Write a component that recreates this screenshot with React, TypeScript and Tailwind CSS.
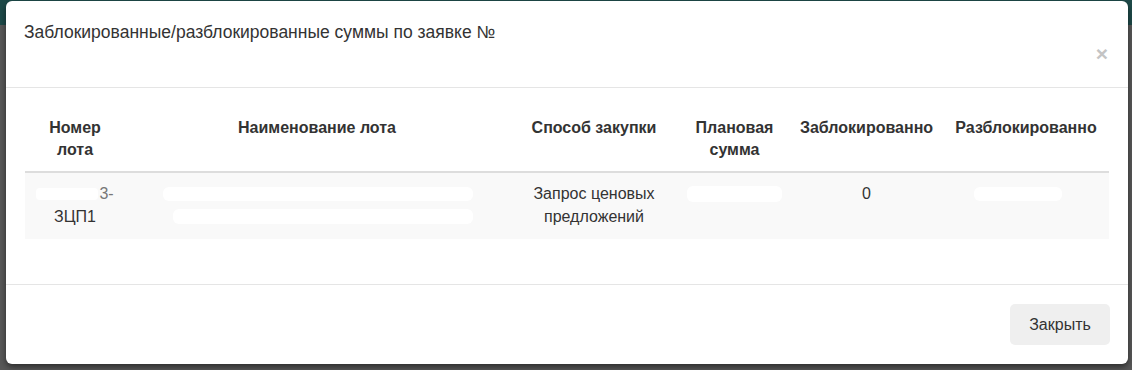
export default function App() {
  return (
    <div className="relative h-[370px] w-[1132px] overflow-hidden bg-[#585858] font-['Liberation_Sans',Arial,sans-serif] text-[#333]">
      <div className="h-[25px] bg-[#1e4a49]" />

      <div className="absolute left-[6px] top-[1px] w-[1122px] rounded-[6px] bg-white shadow-[0_3px_6px_rgba(0,0,0,0.5)]">
        <div className="flex h-[87px] justify-between border-b border-[#e5e5e5] pl-[18px] pr-[20px] pt-[19px]">
          <h4 className="text-[17.5px] leading-[24px]">Заблокированные/разблокированные суммы по заявке №</h4>
          <button className="mt-[23px] h-[22px] text-[21px] font-bold leading-[22px] text-[#c4c4c4]">×</button>
        </div>

        <div className="px-[19px] pb-[45px] pt-[19px]">
          <table className="w-full table-fixed border-collapse text-[16px]">
            <colgroup>
              <col className="w-[100px]" />
              <col className="w-[384px]" />
              <col className="w-[170px]" />
              <col className="w-[111px]" />
              <col className="w-[153px]" />
              <col />
            </colgroup>
            <thead>
              <tr className="border-b-2 border-[#ddd]">
                <th className="px-2 pb-[10px] pt-[10px] align-top text-center font-bold leading-[22px]">Номер лота</th>
                <th className="px-2 pb-[10px] pt-[10px] align-top text-center font-bold leading-[22px]">Наименование лота</th>
                <th className="px-2 pb-[10px] pt-[10px] align-top text-center font-bold leading-[22px]">Способ закупки</th>
                <th className="px-2 pb-[10px] pt-[10px] align-top text-center font-bold leading-[22px]">Плановая сумма</th>
                <th className="px-2 pb-[10px] pt-[10px] align-top text-center font-bold leading-[22px]">Заблокированно</th>
                <th className="px-2 pb-[10px] pt-[10px] align-top text-center font-bold leading-[22px]">Разблокированно</th>
              </tr>
            </thead>
            <tbody>
              <tr className="bg-[#f9f9f9] leading-[23px]">
                <td className="px-2 pb-[11px] pt-[9px] align-top text-center">
                  <div className="flex items-center justify-center">
                    <span className="mr-[1px] inline-block h-[12px] w-[62px] rounded-sm bg-white" />
                    <span className="text-[#777]">3-</span>
                  </div>
                  <div>ЗЦП1</div>
                </td>
                <td className="px-2 pb-[11px] pt-[9px] align-top">
                  <div className="flex h-[23px] items-center">
                    <span className="ml-[30px] inline-block h-[14px] w-[310px] rounded-md bg-white" />
                  </div>
                  <div className="flex h-[23px] items-center">
                    <span className="ml-[40px] inline-block h-[15px] w-[300px] rounded-md bg-white" />
                  </div>
                </td>
                <td className="px-2 pb-[11px] pt-[9px] align-top text-center">Запрос ценовых предложений</td>
                <td className="px-2 pb-[11px] pt-[9px] align-top">
                  <div className="flex h-[23px] items-center justify-center">
                    <span className="inline-block h-[16px] w-[95px] rounded-md bg-white" />
                  </div>
                </td>
                <td className="px-2 pb-[11px] pt-[9px] align-top text-center">0</td>
                <td className="px-2 pb-[11px] pt-[9px] align-top">
                  <div className="flex h-[23px] items-center justify-center pr-[16px]">
                    <span className="inline-block h-[14px] w-[88px] rounded-md bg-white" />
                  </div>
                </td>
              </tr>
            </tbody>
          </table>
        </div>

        <div className="flex justify-end border-t border-[#e5e5e5] pb-[19px] pr-[18px] pt-[19px]">
          <button className="h-[41px] w-[100px] rounded-[5px] bg-[#efefef] text-[16px] text-[#333]">Закрыть</button>
        </div>
      </div>
    </div>
  );
}
